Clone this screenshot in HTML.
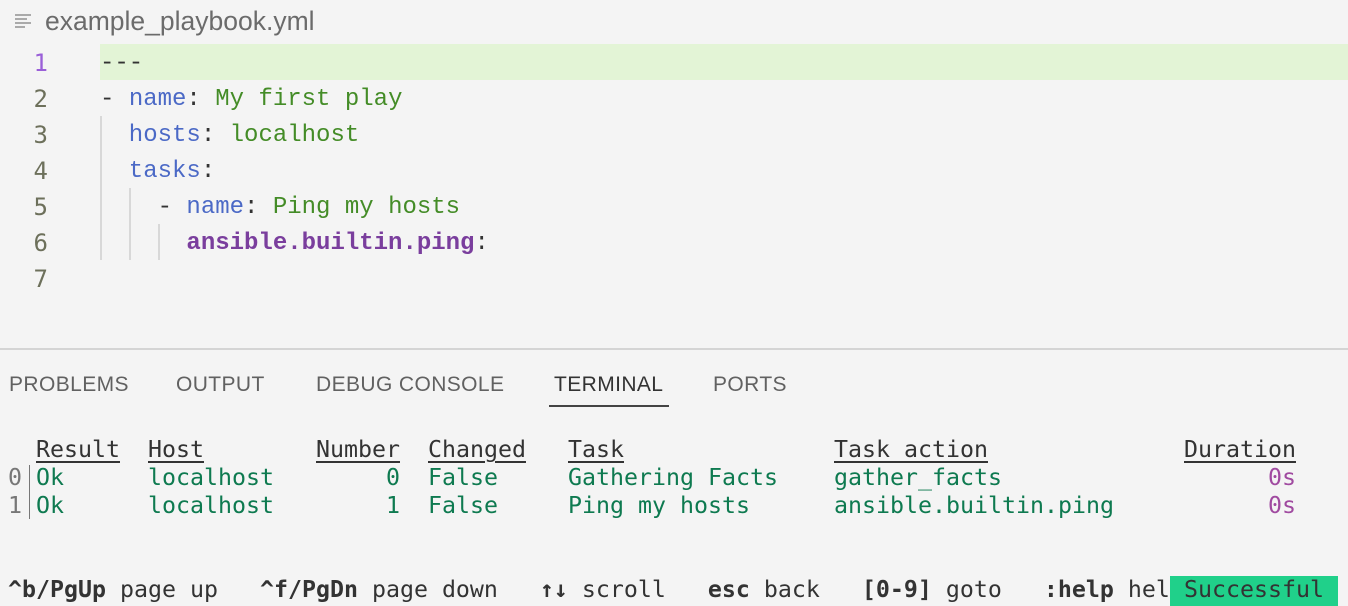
<!DOCTYPE html>
<html><head><meta charset="utf-8"><style>
body{margin:0;width:1348px;height:604px;background:#f4f4f4;position:relative;overflow:hidden;font-family:"Liberation Sans",sans-serif}
.a{position:absolute;white-space:pre}
.code{font-family:"Liberation Mono",monospace;font-size:24px;line-height:36px}
.ln{position:absolute;left:0;width:48px;text-align:right;font-family:"DejaVu Sans Mono",monospace;font-size:24px;line-height:36px;color:#6d705b}
.k{color:#4b69c6}.s{color:#448c27}.p{color:#7a3e9d;font-weight:bold}.d{color:#333}
.g{position:absolute;width:2px;background:#d8d8d8}
.tab{position:absolute;top:373px;font-size:21px;color:#616161;letter-spacing:0.4px}
.t{position:absolute;font-family:"DejaVu Sans Mono",monospace;font-size:23.25px;line-height:28px;white-space:pre;color:#333}
.h{text-decoration:underline;text-underline-offset:4px;text-decoration-thickness:2px}
.gr{color:#0e7a50}.pu{color:#a04aa0}.gy{color:#777}
b{font-weight:bold}
</style></head><body>
<svg class="a" style="left:14px;top:13px" width="18" height="16"><g stroke="#aaa" stroke-width="2"><line x1="1" y1="2" x2="17" y2="2"/><line x1="1" y1="6" x2="13" y2="6"/><line x1="1" y1="10" x2="17" y2="10"/><line x1="1" y1="14" x2="11" y2="14"/></g></svg>
<div class="a" style="left:45px;top:6px;font-size:26.5px;color:#6b6b6b">example_playbook.yml</div>
<div class="a" style="left:100px;top:44px;width:1248px;height:36px;background:#e3f4d6"></div>
<div class="ln" style="top:45px;color:#9a5fd8">1</div>
<div class="ln" style="top:81px">2</div><div class="ln" style="top:117px">3</div><div class="ln" style="top:153px">4</div><div class="ln" style="top:189px">5</div><div class="ln" style="top:225px">6</div><div class="ln" style="top:261px">7</div>
<div class="g" style="left:100px;top:116px;height:144px"></div>
<div class="g" style="left:129px;top:188px;height:72px"></div>
<div class="g" style="left:158px;top:224px;height:36px"></div>
<div class="a code d" style="left:100px;top:46px">---</div>
<div class="a code" style="left:100px;top:82px"><span class="d">- </span><span class="k">name</span><span class="d">: </span><span class="s">My first play</span></div>
<div class="a code" style="left:100px;top:118px"><span class="k">  hosts</span><span class="d">: </span><span class="s">localhost</span></div>
<div class="a code" style="left:100px;top:154px"><span class="k">  tasks</span><span class="d">:</span></div>
<div class="a code" style="left:100px;top:190px"><span class="d">    - </span><span class="k">name</span><span class="d">: </span><span class="s">Ping my hosts</span></div>
<div class="a code" style="left:100px;top:226px"><span class="p">      ansible.builtin.ping</span><span class="d">:</span></div>
<div class="a" style="left:0;top:348px;width:1348px;height:2px;background:#d4d4d4"></div>
<div class="tab" style="left:9px">PROBLEMS</div>
<div class="tab" style="left:176px">OUTPUT</div>
<div class="tab" style="left:316px">DEBUG CONSOLE</div>
<div class="tab" style="left:554px;color:#333">TERMINAL</div>
<div class="tab" style="left:713px">PORTS</div>
<div class="a" style="left:549px;top:405px;width:120px;height:2px;background:#444"></div>
<div class="t h" style="left:36px;top:436px">Result</div>
<div class="t h" style="left:148px;top:436px">Host</div>
<div class="t h" style="left:316px;top:436px">Number</div>
<div class="t h" style="left:428px;top:436px">Changed</div>
<div class="t h" style="left:568px;top:436px">Task</div>
<div class="t h" style="left:834px;top:436px">Task action</div>
<div class="t h" style="left:1184px;top:436px">Duration</div>
<div class="a" style="left:29px;top:465px;width:1px;height:54px;background:#777"></div>
<div class="t gy" style="left:8px;top:464px">0</div><div class="t gy" style="left:8px;top:492px">1</div>
<div class="t gr" style="left:36px;top:464px">Ok</div><div class="t gr" style="left:36px;top:492px">Ok</div>
<div class="t gr" style="left:148px;top:464px">localhost</div><div class="t gr" style="left:148px;top:492px">localhost</div>
<div class="t gr" style="left:386px;top:464px">0</div><div class="t gr" style="left:386px;top:492px">1</div>
<div class="t gr" style="left:428px;top:464px">False</div><div class="t gr" style="left:428px;top:492px">False</div>
<div class="t gr" style="left:568px;top:464px">Gathering Facts</div><div class="t gr" style="left:568px;top:492px">Ping my hosts</div>
<div class="t gr" style="left:834px;top:464px">gather_facts</div><div class="t gr" style="left:834px;top:492px">ansible.builtin.ping</div>
<div class="t pu" style="left:1268px;top:464px">0s</div><div class="t pu" style="left:1268px;top:492px">0s</div>
<div class="t" style="left:8px;top:576px"><b>^b/PgUp</b> page up   <b>^f/PgDn</b> page down   <b>↑↓</b> scroll   <b>esc</b> back   <b>[0-9]</b> goto   <b>:help</b> hel</div>
<div class="t" style="left:1170px;top:576px;width:168px;background:#20d08a;height:30px"> Successful </div>
</body></html>
